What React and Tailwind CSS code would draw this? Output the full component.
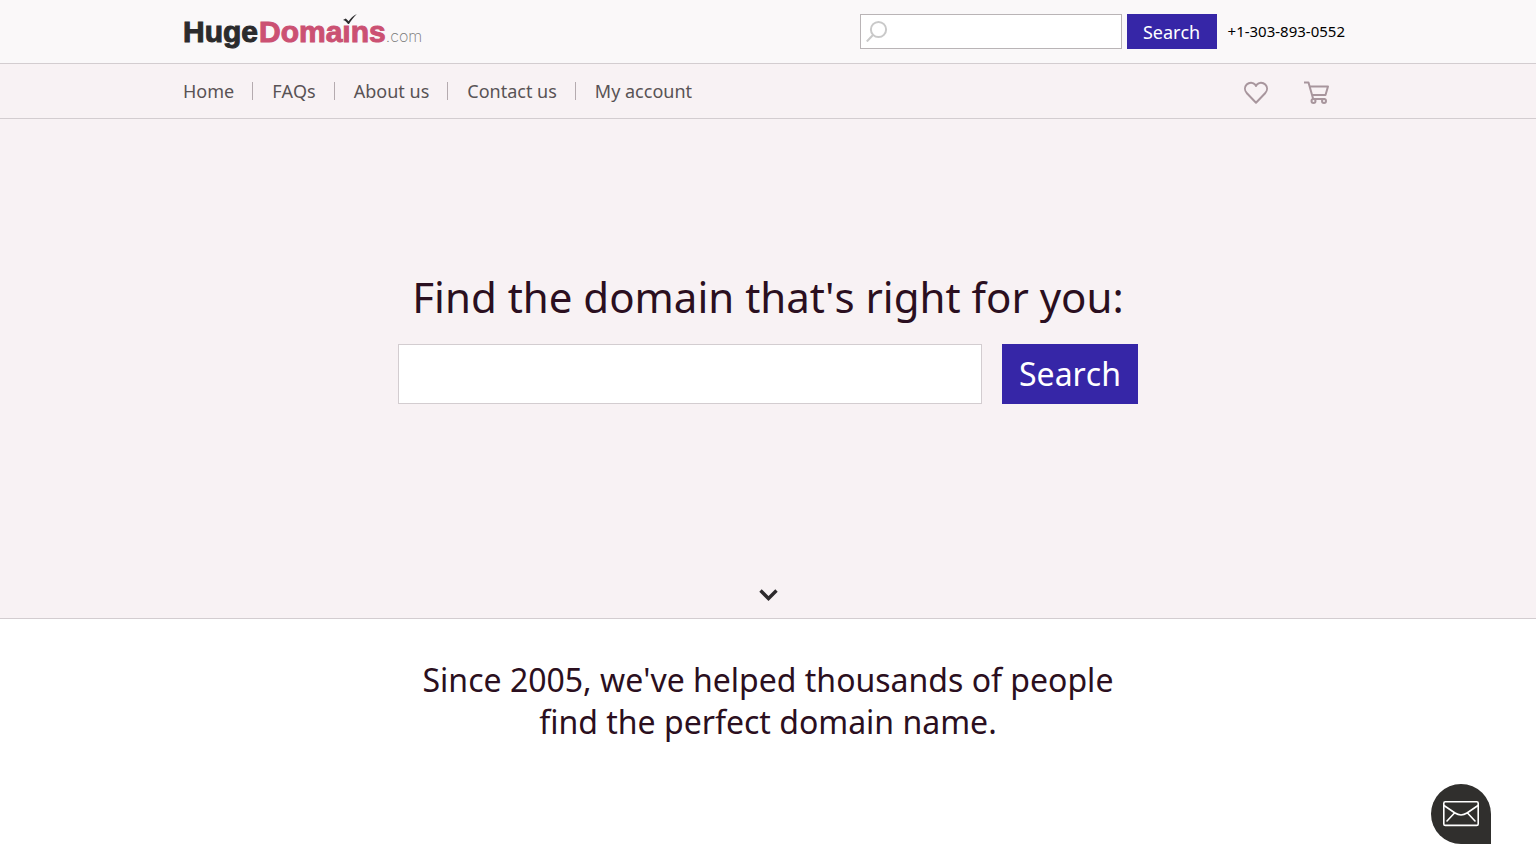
import clsx from "clsx";

const navLinks = ["Home", "FAQs", "About us", "Contact us", "My account"];

// the tick stands in for the dot of the "i", so the wordmark uses a dotless one
const Logo = () => (
  <a href="#" className="relative flex h-9 items-center font-['Liberation_Sans',sans-serif]" aria-label="HugeDomains.com">
    <span className="text-[30px] leading-9 font-bold text-[#2b2b2d] [-webkit-text-stroke:1px_#2b2b2d]">Huge</span>
    <span className="pl-px text-[30px] leading-9 font-bold text-[#cb5173] [-webkit-text-stroke:1px_#cb5173]">Domaıns</span>
    <span className="self-end font-[Inter,sans-serif] text-base leading-7 font-extralight text-[#777]">.com</span>
    <svg className="absolute left-40 top-0 h-3 w-4" viewBox="0 0 16 12" aria-hidden="true">
      <path d="M0 6 2.8 4.5 5.6 7.2C7.5 4.5 10 2 13.8 0 10.5 3.5 8 6.5 6 10L5 10C3.8 8.2 2.2 6.6 0 6Z" fill="#2b2b2d" />
    </svg>
  </a>
);

const HeartIcon = () => (
  <svg className="size-6" viewBox="0 0 24 24" fill="none" stroke="#a8969d" strokeWidth="2" strokeLinejoin="round" aria-hidden="true">
    <path d="M12 21.8 2.9 12.2C.4 9.6.4 5.9 2.7 3.5 5.2 1 9.2 1.1 11.2 3.7L12 4.9 12.8 3.7C14.8 1.1 18.8 1 21.3 3.5 23.6 5.9 23.6 9.6 21.1 12.2Z" />
  </svg>
);

const CartIcon = () => (
  <svg className="h-6 w-[26px]" viewBox="0 0 26 24" fill="none" stroke="#a8969d" strokeWidth="2" strokeLinejoin="round" aria-hidden="true">
    <path d="M0 1.5H4.5L9.2 18H21M6 5.5H24L21.5 14H8.5" />
    <circle cx="9.5" cy="20" r="2" />
    <circle cx="20" cy="20" r="2" />
  </svg>
);

const SearchIcon = () => (
  <svg className="pointer-events-none absolute left-[6px] top-[6px] size-[22px]" viewBox="0 0 22 22" fill="none" stroke="#c9c9c9" strokeWidth="2" aria-hidden="true">
    <circle cx="12.5" cy="9.5" r="7.6" />
    <path d="M7 15 .8 21.5" />
  </svg>
);

const Header = () => (
  <header className="border-b border-[#d3cdd0] bg-[#faf8f9]">
    <div className="mx-auto flex h-[63px] max-w-[1170px] items-center justify-between pr-2">
      <Logo />
      <div className="flex items-center">
        <form className="flex gap-[5px]" onSubmit={(e) => e.preventDefault()}>
          <div className="relative">
            <SearchIcon />
            <input
              type="text"
              aria-label="Search domains"
              className="h-[35px] w-[262px] border border-[#b9b4b6] bg-white pr-2 pl-8 text-lg outline-none"
            />
          </div>
          <button type="submit" className="h-[35px] w-[90px] bg-[#3626a7] text-lg text-white">
            Search
          </button>
        </form>
        <a href="tel:+13038930552" className="ml-[11px] text-[15px] text-black">
          +1-303-893-0552
        </a>
      </div>
    </div>
  </header>
);

const Nav = () => (
  <nav className="border-b border-[#d3cdd0] bg-[#f8f2f4]">
    <div className="mx-auto flex h-[54px] max-w-[1170px] items-center justify-between pr-[23px]">
      <ul className="flex items-center">
        {navLinks.map((link, i) => (
          <li
            key={link}
            className={clsx("flex h-[18px] items-center", i > 0 && "ml-[18px] border-l border-[#b5abaf] pl-[19px]")}
          >
            <a href="#" className="text-lg text-[#595355]">
              {link}
            </a>
          </li>
        ))}
      </ul>
      <div className="flex items-center gap-9 pt-1">
        <a href="#" aria-label="Favorites">
          <HeartIcon />
        </a>
        <a href="#" aria-label="Cart">
          <CartIcon />
        </a>
      </div>
    </div>
  </nav>
);

const Hero = () => (
  <section className="flex flex-col items-center border-b border-[#d3cdd0] bg-[#f8f2f4] pt-[148px] pb-[17px]">
    <h1 className="text-[42px] leading-[60px] text-[#2b0f20]">Find the domain that's right for you:</h1>
    <form className="mt-[17px] flex w-full max-w-[740px] gap-5" onSubmit={(e) => e.preventDefault()}>
      <input
        type="text"
        aria-label="Find a domain"
        className="h-[60px] min-w-0 flex-1 border border-[#d3cdd0] bg-white px-4 text-[32px] outline-none"
      />
      <button type="submit" className="h-[60px] w-[136px] bg-[#3626a7] text-[32px] leading-[60px] text-white">
        Search
      </button>
    </form>
    <a href="#about" aria-label="Scroll down" className="mt-[185px]">
      <svg className="h-3 w-5" viewBox="0 0 20 12" fill="none" stroke="#2d2a2c" strokeWidth="3.4" aria-hidden="true">
        <path d="M2.5 1.5 10.5 9.5 18.5 1.5" />
      </svg>
    </a>
  </section>
);

const ContactButton = () => (
  <button
    type="button"
    aria-label="Contact us"
    className="fixed right-[45px] bottom-5 flex size-[60px] items-center justify-center rounded-full rounded-br-none bg-[#302f2d]"
  >
    <svg className="h-[26px] w-9" viewBox="0 0 36 26" fill="none" stroke="#fff" strokeWidth="1.6" strokeLinecap="round" aria-hidden="true">
      <rect x="0.8" y="0.8" width="34.4" height="23.6" rx="1.5" />
      <path d="M1 4.5 12 12C16 14.6 20 14.6 24 12L35 4.5M11 12.5 4 20M25 12.5 32 20" />
    </svg>
  </button>
);

export default function App() {
  return (
    <div className="min-h-screen bg-white font-['Noto_Sans',sans-serif] [font-kerning:none]">
      <Header />
      <Nav />
      <main>
        <Hero />
        <section id="about" className="px-4 pt-10">
          <h2 className="mx-auto max-w-[740px] text-center text-[32px] leading-[42px] text-[#2b0f20]">
            Since 2005, we've helped thousands of people find the perfect domain name.
          </h2>
        </section>
      </main>
      <ContactButton />
    </div>
  );
}
